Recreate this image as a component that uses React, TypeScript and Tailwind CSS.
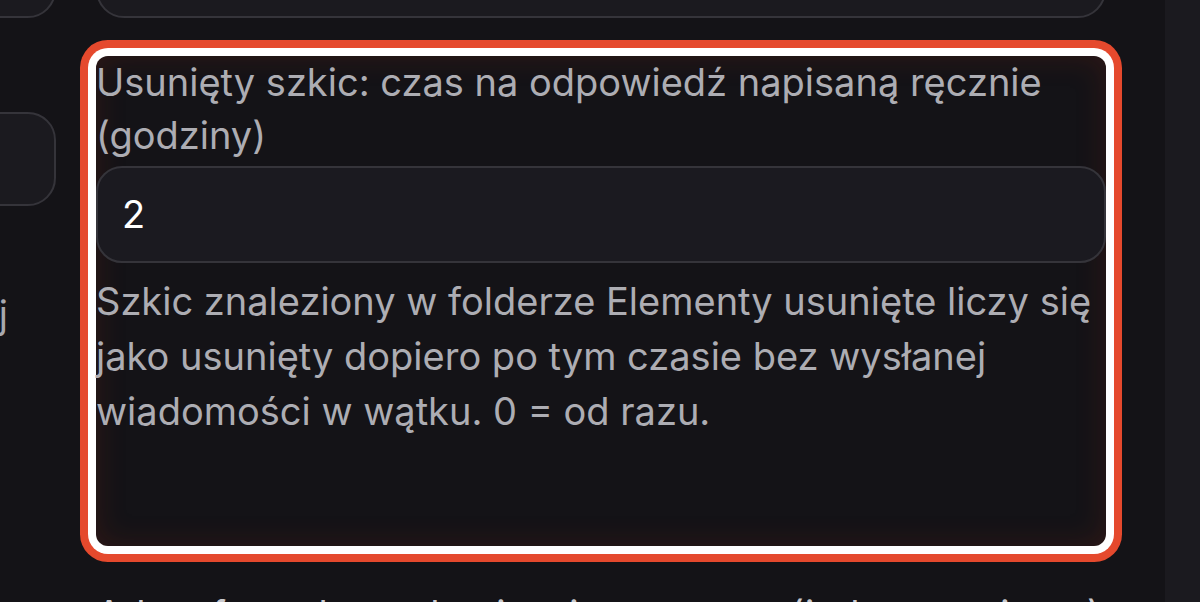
import React from 'react';

const font = { fontFamily: 'Inter, "Noto Sans", sans-serif' };

const SideColumn: React.FC = () => (
  <div className="w-[56px] shrink-0 overflow-hidden">
    <div className="-ml-[200px] flex w-[256px] flex-col">
      <div className="-mt-[60px] h-[78px] shrink-0 rounded-[28px] border-2 border-[#35343a] bg-[#1b1a1f]" />
      <div className="mt-[94px] h-[94px] shrink-0 rounded-[28px] border-2 border-[#35343a] bg-[#1b1a1f]" />
      <div className="mt-[82px] pr-[48px] text-right text-[38px] leading-[53px] text-[#a8a8ae]">Włączonej</div>
    </div>
  </div>
);

const App: React.FC = () => {
  return (
    <div className="flex h-[602px] w-[1200px] overflow-hidden bg-[#141317]" style={font}>
      <SideColumn />
      <main className="ml-[40px] flex w-[1010px] shrink-0 flex-col gap-[38px]">
        <div className="-mt-[80px] h-[98px] shrink-0 rounded-[28px] border-2 border-[#35343a] bg-[#1b1a1f]" />

        <div className="flex h-[490px] shrink-0 flex-col rounded-[12px] bg-[#141317] shadow-[0_0_0_8px_#ffffff,0_0_0_16px_#e5492d,inset_0_0_30px_rgba(150,40,20,0.22)]">
          <label className="text-[38px] leading-[53px] text-[#adadb3]">
            Usunięty szkic: czas na odpowiedź napisaną ręcznie (godziny)
          </label>
          <div className="mt-[4px] flex h-[97px] shrink-0 items-center rounded-[26px] border-2 border-[#35343a] bg-[#1b1a20] px-[24px] text-[38px] text-white">
            2
          </div>
          <p className="mt-[11px] text-[38px] leading-[55px] text-[#adadb3]">
            Szkic znaleziony w folderze Elementy usunięte liczy się jako usunięty dopiero po tym czasie bez wysłanej
            wiadomości w wątku. 0 = od razu.
          </p>
        </div>

        <div className="mt-[4px] shrink-0 text-[38px] leading-[53px] text-[#c9c9ce]">
          Adres formularza do pisania ręcznego (jeden na wiersz)
        </div>
      </main>
      <div className="ml-[59px] flex-1 bg-[#1b1a1f]" />
    </div>
  );
};

export default App;
